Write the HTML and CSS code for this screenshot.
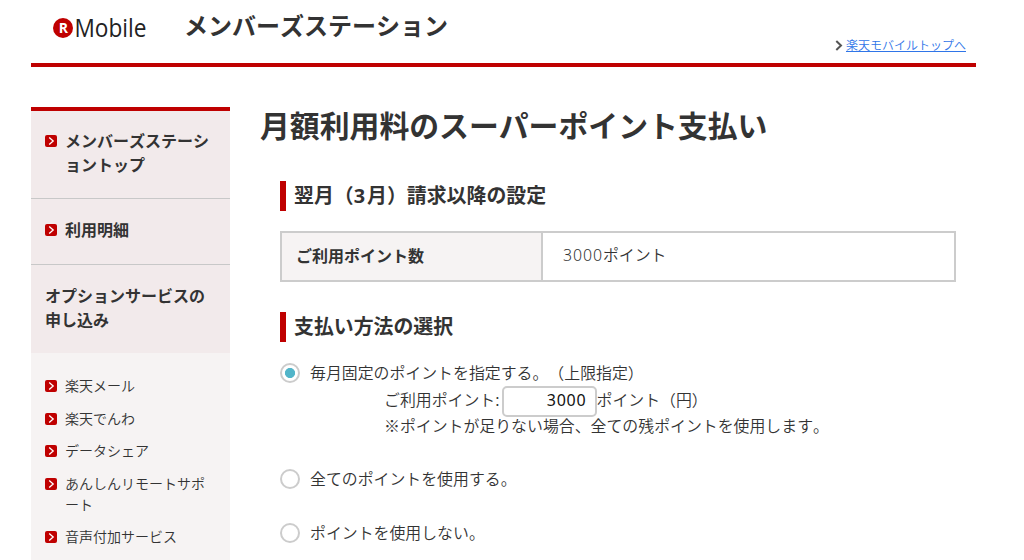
FILE: index.html
```html
<!DOCTYPE html>
<html lang="ja">
<head>
  <meta charset="UTF-8" />
  <meta name="viewport" content="width=device-width, initial-scale=1.0"/>
  <title>メンバーズステーション</title>
  <link rel="stylesheet" href="styles.css">
</head>
<body>

  <svg class="symbols" width="0" height="0">
    <symbol id="arrow" viewBox="0 0 12 12">
      <rect width="12" height="12" rx="2" fill="#bf0000"/>
      <path d="M4.2 2.4 L8.2 6 L4.2 9.6" fill="none" stroke="#fff" stroke-width="1.3"/>
    </symbol>
  </svg>

  <div class="page">
    <header class="header">
      <svg class="logo" width="100" height="44" viewBox="0 -8 100 44">
        <circle cx="10" cy="14" r="10" fill="#bf0000"/>
        <text class="logo-r" x="5.8" y="19">R</text>
        <text class="logo-name" x="21.5" y="23" textLength="72" lengthAdjust="spacingAndGlyphs">Mobile</text>
      </svg>
      <div class="site-title">メンバーズステーション</div>
      <div class="top-link">
        <svg width="8" height="11" viewBox="0 0 8 11"><path d="M1.3 1 L6 5.5 L1.3 10" fill="none" stroke="#555" stroke-width="2"/></svg>
        <a href="#">楽天モバイルトップへ</a>
      </div>
    </header>

    <div class="content">
      <nav class="sidebar">
        <a class="nav-item" href="#"><svg class="arrow"><use href="#arrow"/></svg><span>メンバーズステーショントップ</span></a>
        <a class="nav-item nav-single" href="#"><svg class="arrow"><use href="#arrow"/></svg><span>利用明細</span></a>
        <div class="nav-heading">オプションサービスの申し込み</div>
        <ul class="nav-list">
          <li><svg class="arrow"><use href="#arrow"/></svg><a href="#">楽天メール</a></li>
          <li><svg class="arrow"><use href="#arrow"/></svg><a href="#">楽天でんわ</a></li>
          <li><svg class="arrow"><use href="#arrow"/></svg><a href="#">データシェア</a></li>
          <li><svg class="arrow"><use href="#arrow"/></svg><a href="#">あんしんリモートサポート</a></li>
          <li><svg class="arrow"><use href="#arrow"/></svg><a href="#">音声付加サービス</a></li>
        </ul>
      </nav>

      <main class="main">
        <h1>月額利用料のスーパーポイント支払い</h1>

        <section>
          <h2>翌月（<span class="num">3</span>月）請求以降の設定</h2>
          <table>
            <tr>
              <th>ご利用ポイント数</th>
              <td><span class="num">3000</span>ポイント</td>
            </tr>
          </table>
        </section>

        <section>
          <h2>支払い方法の選択</h2>
          <form>
            <label class="option">
              <input type="radio" name="pay" checked>
              <span>毎月固定のポイントを指定する。（上限指定）</span>
            </label>
            <div class="detail">
              <div class="amount">
                <span>ご利用ポイント:</span><input type="text" value="3000"><span>ポイント（円）</span>
              </div>
              <div>※ポイントが足りない場合、全ての残ポイントを使用します。</div>
            </div>
            <label class="option">
              <input type="radio" name="pay">
              <span>全てのポイントを使用する。</span>
            </label>
            <label class="option">
              <input type="radio" name="pay">
              <span>ポイントを使用しない。</span>
            </label>
          </form>
        </section>
      </main>
    </div>
  </div>

</body>
</html>
```

FILE: styles.css
```css
* {
  box-sizing: border-box;
}

body {
  margin: 0;
  height: 560px;
  overflow: hidden;
  background-color: #fff;
  color: #333;
  font-family: "Noto Sans CJK JP", sans-serif;
  font-size: 15.9px;
  font-weight: 350;
  text-spacing-trim: space-all;
  font-kerning: none;
}

.symbols {
  display: block;
}

.page {
  width: 945px;
  margin-left: 31px;
}

.header {
  display: flex;
  align-items: flex-start;
  height: 67px;
  border-bottom: 4px solid #bf0000;
}

.logo {
  flex: none;
  margin: 6px 0 0 22px;
}

.logo-r {
  font: bold 14px "Open Sans", sans-serif;
  fill: #fff;
}

.logo-name {
  font: 25px "Open Sans", sans-serif;
  fill: #222;
}

.site-title {
  margin: 7px 0 0 31px;
  font-size: 24px;
  font-weight: bold;
  line-height: 36px;
}

.top-link {
  display: flex;
  align-items: center;
  gap: 3px;
  margin: 36px 10px 0 auto;
  font-size: 12px;
  line-height: 18px;
}

.top-link a {
  color: #2f75e8;
}

.content {
  display: flex;
  margin-top: 40px;
}

.sidebar {
  flex: none;
  width: 199px;
  height: 460px;
  border-top: 4px solid #bf0000;
  background-color: #f6f3f3;
}

.sidebar a {
  color: inherit;
  text-decoration: none;
}

.arrow {
  flex: none;
  width: 12px;
  height: 12px;
}

.nav-item,
.nav-heading {
  background-color: #f2eaeb;
  font-size: 16px;
  font-weight: bold;
  line-height: 24px;
}

.nav-item {
  display: flex;
  gap: 8px;
  height: 88px;
  padding: 17px 14px 0;
  border-bottom: 1px solid #c8c8c8;
}

.nav-item .arrow {
  margin-top: 7px;
}

.nav-item span {
  margin-right: -2px;
}

.nav-single {
  height: 66px;
  padding-top: 18px;
}

.nav-heading {
  height: 88px;
  padding: 18px 14px 0;
}

.nav-list {
  margin: 0;
  padding: 22px 14px 0;
  list-style: none;
  font-size: 14px;
  line-height: 21px;
}

.nav-list li {
  display: flex;
  gap: 8px;
  margin-bottom: 11.5px;
}

.nav-list .arrow {
  margin-top: 5px;
}

.nav-list a {
  width: 144px;
}

.main {
  flex: 1;
  padding-left: 30px;
}

h1 {
  margin: -3px 0 37px;
  font-size: 29.85px;
  line-height: 40px;
}

section {
  margin: 0 19px 30px 20px;
}

h2 {
  height: 30px;
  margin: 0 0 20px;
  padding-left: 8px;
  border-left: 6px solid #bf0000;
  font-size: 19.9px;
  line-height: 28px;
}

.num {
  font-family: "Noto Sans", sans-serif;
  letter-spacing: 0.9px;
  line-height: 1;
}

h2 .num {
  letter-spacing: 2px;
}

table {
  width: 676px;
  height: 51px;
  border-collapse: collapse;
  table-layout: fixed;
}

th, td {
  border: 2px solid #ccc;
  padding: 0 0 4px;
  text-align: left;
  line-height: 24px;
}

th {
  width: 261px;
  padding-left: 14px;
  background-color: #f6f3f3;
  font-size: 16px;
}

td {
  padding-left: 20px;
}

.option {
  display: flex;
  align-items: center;
  gap: 10px;
  height: 24px;
  margin-bottom: 30px;
}

.option span {
  margin-top: -2px;
}

input[type="radio"] {
  appearance: none;
  width: 20px;
  height: 20px;
  margin: 0;
  border: 2px solid #ccc;
  border-radius: 50%;
}

input[type="radio"]:checked {
  background: radial-gradient(circle, #52b5c9 4.7px, #fff 5.4px);
}

.option:first-child {
  margin-top: -1px;
  margin-bottom: 0;
}

.detail {
  margin: 1px 0 29px 104px;
  line-height: 24px;
}

.amount {
  display: flex;
  align-items: center;
  height: 30px;
  margin-bottom: -2px;
}

.amount span {
  margin-top: -3px;
}

.amount input {
  width: 95px;
  height: 31px;
  margin-left: 2px;
  padding: 0 8px 3px;
  border: 2px solid #ccc;
  border-radius: 5px;
  color: #111;
  font: 16px "Noto Sans", sans-serif;
  letter-spacing: 0.8px;
  text-align: right;
}
```
